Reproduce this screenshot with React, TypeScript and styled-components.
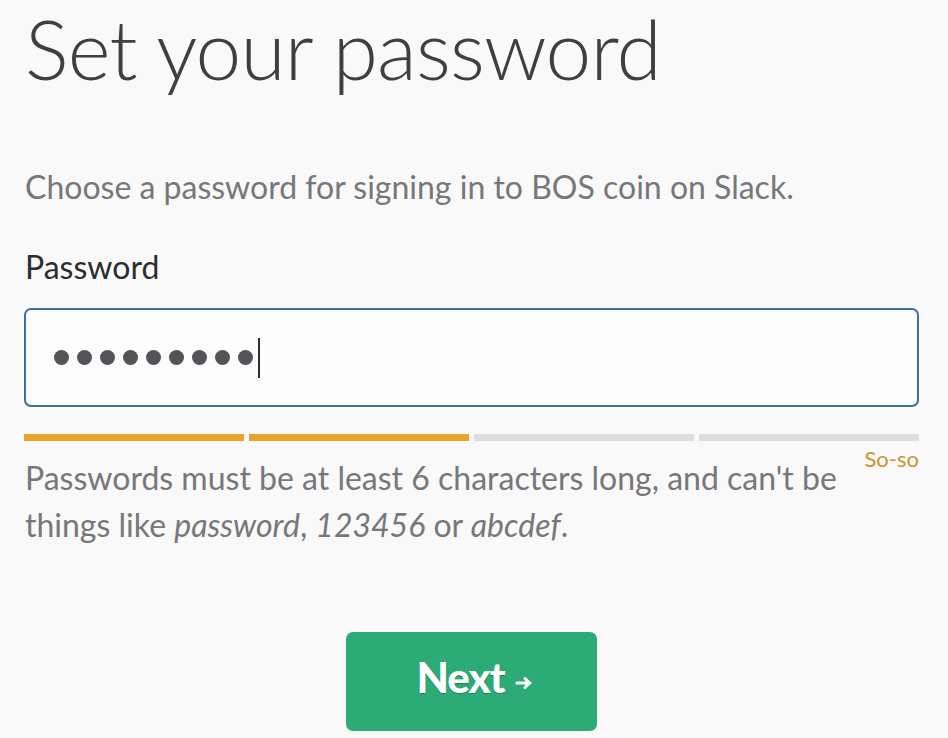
import styled, { createGlobalStyle } from "styled-components";

const GlobalStyle = createGlobalStyle`
  html, body {
    margin: 0;
    padding: 0;
    background-color: #f9f9f9;
  }
  body {
    font-family: Lato, "Open Sans", "Liberation Sans", sans-serif;
  }
`;

const Page = styled.div`
  width: 948px;
  height: 738px;
  box-sizing: border-box;
  padding: 0 29px 0 24px;
  overflow: hidden;
  display: flex;
  flex-direction: column;
`;

const Title = styled.h1`
  margin: 2px 0 0 1px;
  font-size: 82px;
  line-height: 92px;
  font-weight: 300;
  color: #3f3e43;
  letter-spacing: -0.8px;
`;

const Lead = styled.p`
  margin: 73px 0 0 1px;
  font-size: 32px;
  line-height: 40px;
  color: #77777a;
`;

const Label = styled.label`
  margin: 40px 0 0 1px;
  font-size: 32px;
  line-height: 40px;
  color: #2c2d30;
`;

const Field = styled.div`
  margin-top: 21px;
  height: 99px;
  box-sizing: border-box;
  border: 2px solid #3d6e9f;
  border-radius: 7px;
  background-color: #fcfcfc;
  padding-left: 28px;
  display: flex;
  align-items: center;
  gap: 8px;
`;

const Dot = styled.span`
  width: 15px;
  height: 15px;
  border-radius: 50%;
  background-color: #545358;
`;

const Caret = styled.span`
  width: 2px;
  height: 40px;
  margin-left: -3px;
  background-color: #2c2d30;
`;

const Meter = styled.div`
  margin-top: 27px;
  display: flex;
  gap: 5px;
`;

const Segment = styled.div<{ $on: boolean }>`
  flex: 1;
  height: 7px;
  background-color: ${(p) => (p.$on ? "#e9a52a" : "#dddddd")};
`;

const HintRow = styled.div`
  display: flex;
  justify-content: space-between;
  gap: 20px;
`;

const Hint = styled.p`
  margin: 13px 0 0 1px;
  max-width: 830px;
  font-size: 32px;
  line-height: 47px;
  color: #77777a;

  em {
    font-style: italic;
  }
`;

const Strength = styled.span`
  margin-top: 7px;
  font-size: 22px;
  line-height: 22px;
  color: #c8952f;
  white-space: nowrap;
`;

const NextButton = styled.button`
  align-self: center;
  margin-top: 84px;
  width: 251px;
  height: 99px;
  border: 0;
  border-radius: 7px;
  background-color: #2cab77;
  color: #ffffff;
  font-family: Lato, "Open Sans", "Liberation Sans", sans-serif;
  font-size: 42px;
  font-weight: 900;
  letter-spacing: -1px;
  text-shadow: 0 1px 1px rgba(0, 0, 0, 0.25);
  display: flex;
  align-items: center;
  justify-content: center;
  gap: 10px;
  padding: 0 0 10px 6px;
  cursor: pointer;
`;

const Arrow = styled.svg`
  margin-top: 12px;
`;

export default function App() {
  const filled = 9;
  const strength = [true, true, false, false];

  return (
    <>
      <GlobalStyle />
      <Page>
        <Title>Set your password</Title>
        <Lead>Choose a password for signing in to BOS coin on Slack.</Lead>
        <Label>Password</Label>
        <Field>
          {Array.from({ length: filled }).map((_, i) => (
            <Dot key={i} />
          ))}
          <Caret />
        </Field>
        <Meter>
          {strength.map((on, i) => (
            <Segment key={i} $on={on} />
          ))}
        </Meter>
        <HintRow>
          <Hint>
            Passwords must be at least 6 characters long, and can't be things
            like <em>password</em>, <em>123456</em> or <em>abcdef</em>.
          </Hint>
          <Strength>So-so</Strength>
        </HintRow>
        <NextButton>
          Next
          <Arrow width="18" height="16" viewBox="0 0 18 16">
            <path
              d="M2 8h13M10 3.5L14.5 8L10 12.5"
              fill="none"
              stroke="#ffffff"
              strokeWidth="3"
              strokeLinecap="round"
              strokeLinejoin="round"
            />
          </Arrow>
        </NextButton>
      </Page>
    </>
  );
}
